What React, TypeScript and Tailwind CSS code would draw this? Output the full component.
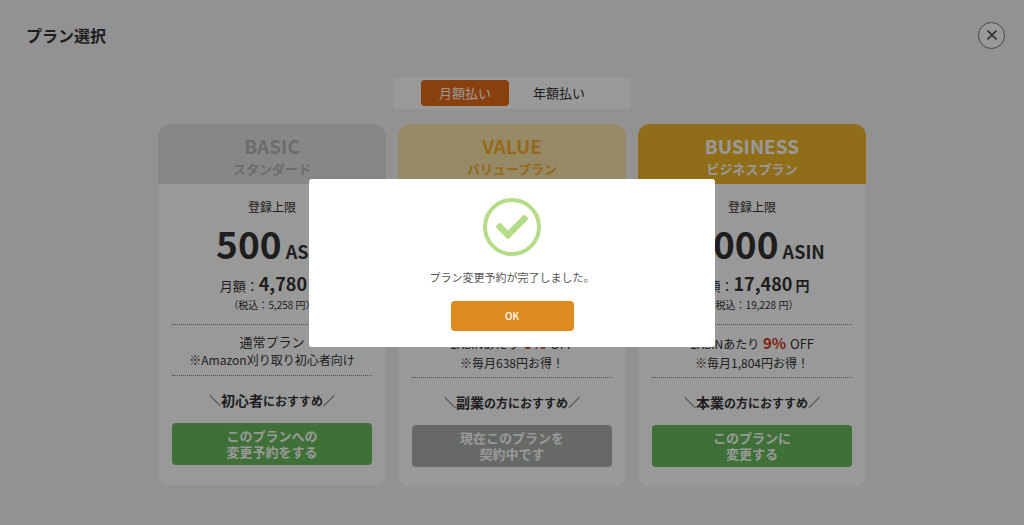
import { FaCheck } from "react-icons/fa";
import type { ReactNode } from "react";

type Plan = {
    name: string;
    label: string;
    headClass: string;
    limit: string;
    price: string;
    taxPrice: string;
    note: ReactNode;
    target: string;
    targetSuffix: string;
    buttonLines: [string, string];
    current?: boolean;
};

function Discount({ percent, saving }: { percent: number; saving: string }) {
    return (
        <>
            <p className="leading-[22px]">
                1ASINあたり <strong className="px-px text-[15px] leading-none text-[#cf3b20]">{percent}%</strong>{" "}
                <span className="text-[13px] leading-none">OFF</span>
            </p>
            <p className="leading-4">※毎月{saving}円お得！</p>
        </>
    );
}

const plans: Plan[] = [
    {
        name: "BASIC",
        label: "スタンダード",
        headClass: "bg-[#e2e2e2] text-[#b3b5b3]",
        limit: "500",
        price: "4,780",
        taxPrice: "5,258",
        note: (
            <>
                <p className="text-[13px] leading-[18px]">通常プラン</p>
                <p className="leading-[18px]">※Amazon刈り取り初心者向け</p>
            </>
        ),
        target: "初心者",
        targetSuffix: "におすすめ",
        buttonLines: ["このプランへの", "変更予約をする"],
    },
    {
        name: "VALUE",
        label: "バリュープラン",
        headClass: "bg-[#fbe6ab] text-[#f5af2d]",
        limit: "1,000",
        price: "8,980",
        taxPrice: "9,878",
        note: <Discount percent={6} saving="638" />,
        target: "副業",
        targetSuffix: "の方におすすめ",
        buttonLines: ["現在このプランを", "契約中です"],
        current: true,
    },
    {
        name: "BUSINESS",
        label: "ビジネスプラン",
        headClass: "bg-[#eeb62b] text-white",
        limit: "2,000",
        price: "17,480",
        taxPrice: "19,228",
        note: <Discount percent={9} saving="1,804" />,
        target: "本業",
        targetSuffix: "の方におすすめ",
        buttonLines: ["このプランに", "変更する"],
    },
];

function PlanCard({ plan }: { plan: Plan }) {
    return (
        <article className="flex-1 overflow-hidden rounded-xl bg-white text-center text-xs">
            <header className={`h-[60px] pt-2.5 font-bold ${plan.headClass}`}>
                <h2 className="text-[19px] leading-6">{plan.name}</h2>
                <p className="text-[13px] leading-[22px]">{plan.label}</p>
            </header>

            <div className="px-3.5 pt-[13px] pb-5 whitespace-nowrap">
                <p className="leading-5">登録上限</p>
                <p className="mt-1 text-[37px] leading-11 font-bold">
                    {plan.limit}
                    <span className="text-lg leading-none"> ASIN</span>
                </p>
                <p className="mt-0.5 text-lg leading-8 font-bold">
                    <span className="text-[13px] leading-none font-normal">月額：</span>
                    {plan.price}
                    <span className="text-sm leading-none"> 円</span>
                </p>
                <p className="text-[10px] leading-3">（税込：{plan.taxPrice} 円）</p>

                <div className="mt-[13px] border-y border-dotted border-[#888] pt-2 pb-1.5">{plan.note}</div>

                <p className="mt-3 text-sm leading-6 font-bold">
                    <span className="text-xs leading-none font-normal">＼</span>
                    {plan.target}
                    <span className="text-xs leading-none">{plan.targetSuffix}</span>
                    <span className="text-xs leading-none font-normal">／</span>
                </p>

                <button
                    type="button"
                    disabled={plan.current}
                    className={`mt-[11px] w-full rounded py-[5px] text-[13px] leading-4 font-bold text-white ${
                        plan.current ? "bg-[#aaafaa]" : "bg-[#69bb5c]"
                    }`}
                >
                    {plan.buttonLines[0]}
                    <br />
                    {plan.buttonLines[1]}
                </button>
            </div>
        </article>
    );
}

function CompleteDialog() {
    return (
        <div className="fixed inset-0 flex items-center justify-center bg-black/40">
            <div
                role="dialog"
                aria-modal="true"
                aria-labelledby="dialog-message"
                className="flex w-[406px] flex-col items-center rounded-[3px] bg-white pt-[19px] pb-4"
            >
                <div className="flex size-[58px] items-center justify-center rounded-full border-4 border-[#b5dc88] text-[#b5dc88]">
                    <FaCheck className="size-8" />
                </div>
                <p id="dialog-message" className="mt-[11px] text-[11px] leading-5 text-[#555]">
                    プラン変更予約が完了しました。
                </p>
                <button
                    type="button"
                    className="mt-3.5 h-[30px] w-[123px] rounded bg-[#dd8a20] text-[10px] font-medium text-white"
                >
                    OK
                </button>
            </div>
        </div>
    );
}

export default function App() {
    return (
        <div
            lang="ja"
            className="min-h-screen bg-[#f3f3f3] font-[family-name:'Noto_Sans_CJK_JP','Noto_Sans_CJK_SC',sans-serif] text-[#333]"
        >
            {/* Page title and close button */}
            <header className="flex items-center justify-between pt-[21px] pr-[19px] pl-[26px]">
                <h1 className="text-base leading-7 font-bold">プラン選択</h1>
                <button
                    type="button"
                    aria-label="閉じる"
                    className="flex size-[27px] items-center justify-center rounded-full border border-[#777] bg-white"
                >
                    <svg viewBox="0 0 10 10" className="size-2.5" fill="none" stroke="#555" strokeWidth="1.6">
                        <path d="M0.5 0.5 9.5 9.5M9.5 0.5 0.5 9.5" />
                    </svg>
                </button>
            </header>

            <main className="mx-auto max-w-[708px] pt-7">
                {/* Payment cycle */}
                <div className="mx-auto flex w-[238px] justify-center gap-1.5 rounded bg-white py-[3px] text-[13px]">
                    <button type="button" className="h-[26px] w-[88px] rounded bg-[#e66b17] text-white">
                        月額払い
                    </button>
                    <button type="button" className="h-[26px] w-[88px] rounded">
                        年額払い
                    </button>
                </div>

                {/* Plans */}
                <div className="mt-[15px] flex items-start gap-3">
                    {plans.map((plan) => (
                        <PlanCard key={plan.name} plan={plan} />
                    ))}
                </div>
            </main>

            <CompleteDialog />
        </div>
    );
}
